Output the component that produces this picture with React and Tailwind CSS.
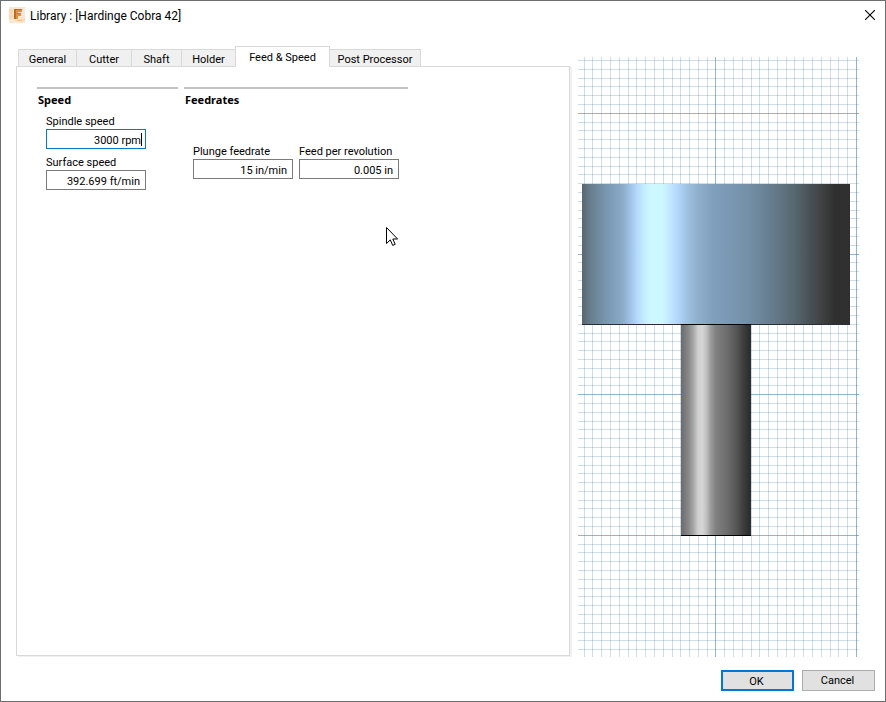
import React, { useState } from 'react';

const TABS = [
  { name: 'General', width: 'w-[59px]' },
  { name: 'Cutter', width: 'w-[55px]' },
  { name: 'Shaft', width: 'w-[50px]' },
  { name: 'Holder', width: 'w-[54px]' },
  { name: 'Feed & Speed', width: 'w-[95px]' },
  { name: 'Post Processor', width: 'w-[91px]' },
];

// Grid spacing of the preview, one major line every 16 cells
const columns = [];
for (let k = -15; k <= 16; k++) {
  columns.push({ pos: Math.round(137.41 + 8.78 * k), major: k % 16 === 0 });
}
const rows = [];
for (let k = -54; k <= 13; k++) {
  rows.push({ pos: Math.round(477.83 + 8.791 * k), major: k % 16 === 0 });
}

const CUTTER_STOPS = [
  ['0', '#58666f'], ['0.03', '#687d8d'], ['0.09', '#7896b0'], ['0.15', '#8aaac8'], ['0.19', '#a6cbee'],
  ['0.21', '#b6dcff'], ['0.24', '#c9f2ff'], ['0.26', '#cdf8ff'], ['0.3', '#cdf8ff'], ['0.33', '#c0e6ff'],
  ['0.36', '#b0d5fb'], ['0.39', '#a0c3e4'], ['0.43', '#90b0cd'], ['0.49', '#7f9fbc'], ['0.62', '#7390a7'],
  ['0.72', '#647989'], ['0.79', '#576870'], ['0.85', '#495156'], ['0.9', '#3e4040'], ['0.94', '#303030'],
  ['1', '#2f2f2f'],
];

const SHAFT_STOPS = [
  ['0', '#6b6b6b'], ['0.1', '#868686'], ['0.18', '#a8a8a8'], ['0.24', '#cfcfcf'], ['0.3', '#d6d6d6'],
  ['0.36', '#c2c2c2'], ['0.43', '#999999'], ['0.5', '#808080'], ['0.65', '#6e6e6e'], ['0.8', '#545454'],
  ['0.9', '#3c3c3c'], ['0.96', '#303030'], ['1', '#2d2d2d'],
];

const AppIcon = () => (
  <svg viewBox="0 0 16 16" className="w-4 h-4" aria-hidden="true">
    <rect width="16" height="16" fill="#fce6d2" />
    <path d="M0 2h4v10H0zM8 13l8-2v3H8z" fill="#fad9b9" />
    <path d="M5 2h8v3H9v1h3v3H9v3H5z" fill="#e0913f" />
    <path d="M5 2h8v1H7v9H5z" fill="#bd6c1c" />
    <path d="M8 6h4v1H8z" fill="#c97a2b" />
    <path d="M8 13h5v1H8z" fill="#f2bd7d" />
  </svg>
);

const Field = ({ id, label, value, onChange, active = false }) => (
  <div className="flex flex-col w-[100px]">
    <label htmlFor={id} className="h-[17px] leading-5 whitespace-nowrap">{label}</label>
    <div
      className={`flex items-center h-5 bg-white border ${
        active ? 'border-[#0078d7] pr-[3px]' : 'border-[#7a7a7a] pr-[5px]'
      }`}
    >
      <input
        id={id}
        type="text"
        value={value}
        onChange={(e) => onChange(e.target.value)}
        className="w-full min-w-0 h-[18px] pt-[3px] text-right bg-transparent outline-none"
      />
      {active && <span className="w-px h-[13px] shrink-0 bg-black" />}
    </div>
  </div>
);

const Stops = ({ stops }) => stops.map(([offset, color]) => (
  <stop key={offset} offset={offset} stopColor={color} />
));

const ToolPreview = () => (
  <svg
    viewBox="0 0 281 600"
    className="w-[281px] h-[600px] shrink-0"
    shapeRendering="crispEdges"
    role="img"
    aria-label="Tool preview"
  >
    <defs>
      <linearGradient id="cutter"><Stops stops={CUTTER_STOPS} /></linearGradient>
      <linearGradient id="shaft"><Stops stops={SHAFT_STOPS} /></linearGradient>
    </defs>
    {columns.map(({ pos, major }) => (
      <rect key={pos} x={pos} y="0" width="1" height="600" fill="#4682b4" fillOpacity={major ? 0.6 : 0.27} />
    ))}
    {rows.map(({ pos, major }) => (
      <rect key={pos} x="0" y={pos} width="281" height="1" fill="#4682b4" fillOpacity={major ? 0.6 : 0.27} />
    ))}
    <rect x="4" y="127" width="268" height="141" fill="url(#cutter)" />
    <rect x="4" y="267" width="268" height="1" fill="#2b2b33" />
    <rect x="103" y="267" width="70" height="212" fill="url(#shaft)" />
    <rect x="103" y="267" width="70" height="1" fill="#000" />
    <rect x="103" y="478" width="70" height="1" fill="#000" />
  </svg>
);

const App = () => {
  const [activeTab, setActiveTab] = useState('Feed & Speed');
  const [values, setValues] = useState({
    spindle: '3000 rpm',
    surface: '392.699 ft/min',
    plunge: '15 in/min',
    revolution: '0.005 in',
  });

  const update = (key) => (value) => setValues({ ...values, [key]: value });

  return (
    <div className="relative flex flex-col min-h-screen bg-white border border-[#6e6e6e] text-black text-[11px] font-[Roboto,sans-serif]">
      {/* Title bar */}
      <header className="flex items-center h-7 pl-2 pr-[10px]">
        <AppIcon />
        <h1 className="ml-[5px] pt-0.5 flex-1 text-xs">Library : [Hardinge Cobra 42]</h1>
        <button type="button" aria-label="Close">
          <svg viewBox="0 0 10 10" className="w-[10px] h-[10px]">
            <path d="M0 0L10 10M10 0L0 10" stroke="#000" strokeWidth="1.100" fill="none" />
          </svg>
        </button>
      </header>

      <main className="flex flex-1 pl-[15px] pr-[26px] pt-[17px]">
        <div className="flex flex-col flex-1 min-w-0 pb-px">
          {/* Tabs */}
          <div role="tablist" className="flex items-end h-[21px] pl-0.5">
            {TABS.map(({ name, width }) => (
              <button
                key={name}
                type="button"
                role="tab"
                aria-selected={name === activeTab}
                onClick={() => setActiveTab(name)}
                className={`${width} pt-0.5 border-[#d9d9d9] text-center whitespace-nowrap ${
                  name === activeTab
                    ? 'h-[21px] -ml-px bg-white border-x border-t relative z-10'
                    : 'h-[18px] bg-[#f0f0f0] border-r border-t first:border-l'
                }`}
              >
                {name}
              </button>
            ))}
          </div>

          {/* Tab page */}
          <section className="flex-1 -mt-px bg-white border border-[#d9d9d9] shadow-[2px_1px_0_#f0f0f0]">
            <div className="flex gap-[6px] pt-5 pl-5">
              <fieldset className="w-[141px] border-t-2 border-[#c3c3c3]">
                <h2 className="pt-[3px] pl-px leading-4 font-bold font-['Noto_Sans',sans-serif]">Speed</h2>
                <div className="flex flex-col gap-1 pt-1 pl-[9px]">
                  <Field id="spindle" label="Spindle speed" value={values.spindle} onChange={update('spindle')} active />
                  <Field id="surface" label="Surface speed" value={values.surface} onChange={update('surface')} />
                </div>
              </fieldset>
              <fieldset className="w-[224px] border-t-2 border-[#c3c3c3]">
                <h2 className="pt-[3px] pl-px leading-4 font-bold font-['Noto_Sans',sans-serif]">Feedrates</h2>
                <div className="flex gap-[6px] pt-[34px] pl-[9px]">
                  <Field id="plunge" label="Plunge feedrate" value={values.plunge} onChange={update('plunge')} />
                  <Field id="revolution" label="Feed per revolution" value={values.revolution} onChange={update('revolution')} />
                </div>
              </fieldset>
            </div>
          </section>
        </div>
        <div className="pl-2 pt-[11px]">
          <ToolPreview />
        </div>
      </main>

      <footer className="flex justify-end gap-2 pt-[13px] pr-[10px] pb-[10px]">
        <button type="button" className="w-[73px] h-[21px] pt-0.5 pr-0.5 bg-[#e1e1e1] border-2 border-[#0078d7]">OK</button>
        <button type="button" className="w-[73px] h-[21px] pt-0.5 pr-0.5 bg-[#e1e1e1] border border-[#adadad]">Cancel</button>
      </footer>

      {/* Mouse pointer */}
      <svg viewBox="0 0 12 19" className="absolute left-[385px] top-[226px] w-3 h-[19px] pointer-events-none" aria-hidden="true">
        <path d="M0.500 0.500V16.500L4.300 12.900L6.700 18.400L9.200 17.300L6.800 12H11.600Z" fill="#fff" stroke="#000" />
      </svg>
    </div>
  );
};

export default App;
